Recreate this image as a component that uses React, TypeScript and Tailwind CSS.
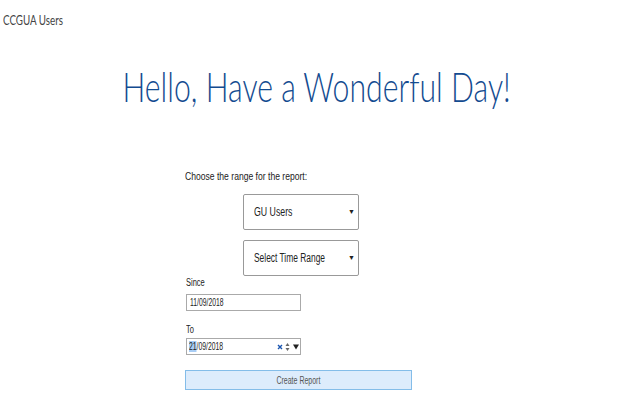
import React from "react";

const arial = { fontFamily: '"Liberation Sans", Arial, sans-serif' };

export default function App() {
  return (
    <div className="w-[640px] h-[400px] bg-white overflow-hidden relative text-[#222]">
      <div className="pl-[3px] pt-[12px] h-[28px] font-['Lato',sans-serif] text-[14px] leading-[16px] text-[#444]">
        <span className="inline-block scale-x-[0.7] origin-left whitespace-nowrap">CCGUA Users</span>
      </div>
      <div className="mt-[34px] flex justify-center pr-[6px] font-['Lato',sans-serif] font-light text-[42px] leading-[48px] text-[#134b90]">
        <span className="inline-block scale-x-[0.72] origin-center whitespace-nowrap">Hello, Have a Wonderful Day!</span>
      </div>
      <div className="ml-[185px] mt-[60px] w-[227px] flex flex-col" style={arial}>
        <div className="text-[11px] leading-[13px] text-[#222] h-[13px]">
          <span className="inline-block scale-x-[0.78] origin-left whitespace-nowrap">Choose the range for the report:</span>
        </div>
        <div className="mt-[11px] ml-[58px] w-[116px] h-[36px] border border-[#999] rounded-[2px] flex items-center pl-[10px] pr-[3px] text-[12px]">
          <div className="flex-1 min-w-0 whitespace-nowrap">
            <span className="inline-block scale-x-[0.73] origin-left">GU Users</span>
          </div>
          <span className="text-[7px]">▼</span>
        </div>
        <div className="mt-[10px] ml-[58px] w-[116px] h-[36px] border border-[#999] rounded-[2px] flex items-center pl-[10px] pr-[3px] text-[12px]">
          <div className="flex-1 min-w-0 whitespace-nowrap">
            <span className="inline-block scale-x-[0.7] origin-left">Select Time Range</span>
          </div>
          <span className="text-[7px]">▼</span>
        </div>
        <div className="mt-[1px] text-[10px] leading-[12px] h-[12px] pl-[1px]">
          <span className="inline-block scale-x-[0.75] origin-left">Since</span>
        </div>
        <div className="mt-[5px] ml-[1px] w-[115px] h-[17px] border border-[#aaa] flex items-center pl-[3px] text-[10px]">
          <span className="inline-block scale-x-[0.68] origin-left whitespace-nowrap">11/09/2018</span>
        </div>
        <div className="mt-[13px] text-[10px] leading-[12px] h-[12px] pl-[1px]">
          <span className="inline-block scale-x-[0.75] origin-left">To</span>
        </div>
        <div className="mt-[2px] ml-[1px] w-[115px] h-[17px] border border-[#aaa] flex items-center pl-[2px] pr-[1px] text-[10px]">
          <div className="flex-1 min-w-0 whitespace-nowrap">
            <span className="inline-block scale-x-[0.68] origin-left">
              <span className="bg-[#a8cdf5]">21</span>/09/2018
            </span>
          </div>
          <span className="flex items-center">
            <svg width="6" height="6" viewBox="0 0 6 6" className="mr-[2px] mt-[1px]">
              <path d="M1 1L5 5M5 1L1 5" stroke="#1a55b0" strokeWidth="1.4" />
            </svg>
            <svg width="5" height="10" viewBox="0 0 5 10" className="mr-[3px]">
              <path d="M0.5 4L2.5 1L4.5 4Z" fill="#666" />
              <path d="M0.5 6L2.5 9L4.5 6Z" fill="#666" />
            </svg>
            <svg width="6" height="6" viewBox="0 0 6 6">
              <path d="M0 0.5H6L3 5.5Z" fill="#222" />
            </svg>
          </span>
        </div>
        <button className="mt-[15px] w-[227px] h-[20px] bg-[#ddecfc] border border-[#84bde9] flex items-center justify-center text-[10px] text-[#555]">
          <span className="inline-block scale-x-[0.7] whitespace-nowrap">Create Report</span>
        </button>
      </div>
    </div>
  );
}
